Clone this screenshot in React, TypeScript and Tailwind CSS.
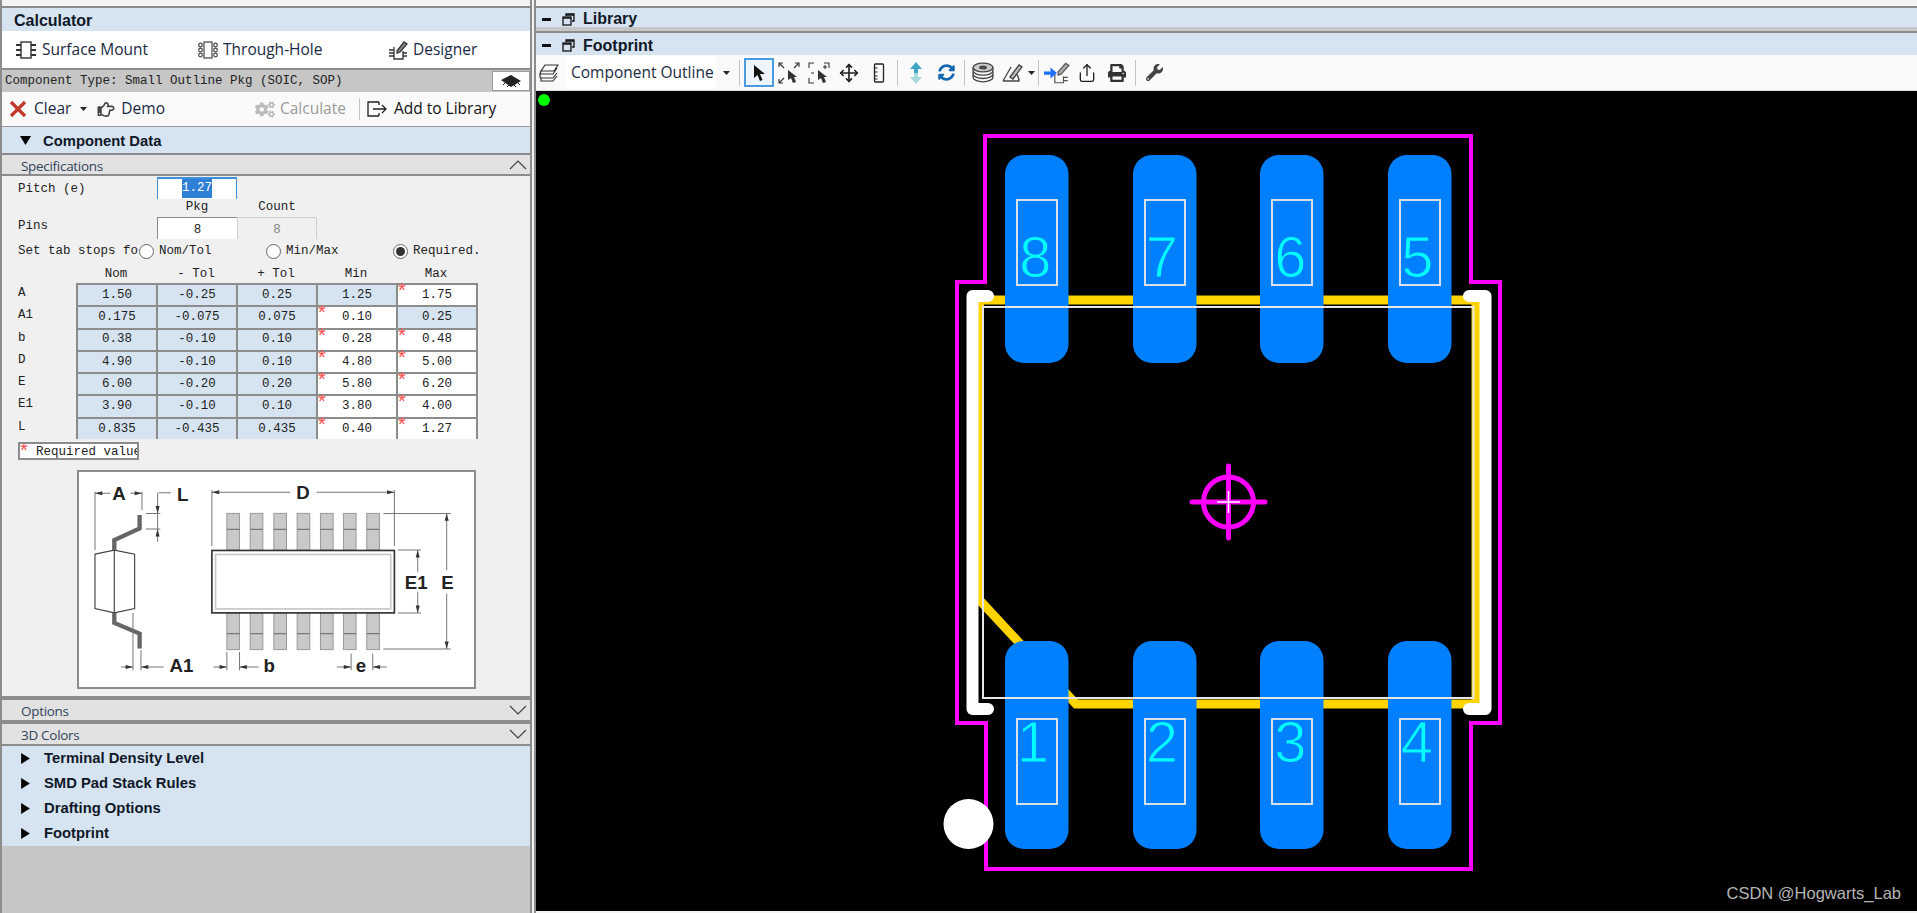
import React from "react";
import { FaCogs, FaPrint, FaRegHandPointRight, FaSyncAlt, FaWrench } from "react-icons/fa";
import { Move, Share } from "lucide-react";

const mono = "font-['Liberation_Mono',monospace] text-[12.5px] text-[#222]";
const ui = "font-['Open_Sans',sans-serif] text-[15.5px] text-[#1a2a44]";
const bold = "font-['Liberation_Sans',sans-serif] font-bold text-[14.8px] text-[#101828]";
const boldLg = "font-['Liberation_Sans',sans-serif] font-bold text-[16px] text-[#101828]";
const star = "absolute font-['Liberation_Sans',sans-serif] text-[#ff4d4d] text-[20px] leading-[20px]";

const rows = [
  { label: "A", vals: ["1.50", "-0.25", "0.25", "1.25", "1.75"], req: [4] },
  { label: "A1", vals: ["0.175", "-0.075", "0.075", "0.10", "0.25"], req: [3] },
  { label: "b", vals: ["0.38", "-0.10", "0.10", "0.28", "0.48"], req: [3, 4] },
  { label: "D", vals: ["4.90", "-0.10", "0.10", "4.80", "5.00"], req: [3, 4] },
  { label: "E", vals: ["6.00", "-0.20", "0.20", "5.80", "6.20"], req: [3, 4] },
  { label: "E1", vals: ["3.90", "-0.10", "0.10", "3.80", "4.00"], req: [3, 4] },
  { label: "L", vals: ["0.835", "-0.435", "0.435", "0.40", "1.27"], req: [3, 4] },
];

const Chevron = ({ up }: { up?: boolean }) => (
  <svg width="18" height="10" viewBox="0 0 18 10" fill="none" stroke="#444" strokeWidth="1.2">
    <polyline points={up ? "1,9 9,1 17,9" : "1,1 9,9 17,1"} />
  </svg>
);

const Caret = ({ open }: { open?: boolean }) => (
  <svg width="11" height="11" viewBox="0 0 10 10" fill="#000">
    <polygon points={open ? "0,1 10,1 5,9" : "1,0 9,5 1,10"} />
  </svg>
);

const SmallDown = () => (
  <svg width="7" height="4" viewBox="0 0 7 4" fill="#222">
    <polygon points="0,0 7,0 3.5,4" />
  </svg>
);

const SectionHeader = ({ title, up, h, mt }: { title: string; up?: boolean; h: string; mt: string }) => (
  <div className={`${h} bg-[#e2e2e2] border-y-2 border-[#8c8c8c] flex items-center justify-between pl-[19px] pr-[3px]`}>
    <span className={`${mt} font-['Open_Sans',sans-serif] text-[13.5px] tracking-[-0.3px] text-[#33435c]`}>{title}</span>
    <Chevron up={up} />
  </div>
);

const IcChip = () => (
  <svg width="22" height="20" viewBox="0 0 22 20" fill="none" stroke="#333" strokeWidth="1.4">
    <rect x="6" y="2" width="10" height="16" />
    <path d="M1 5h5M1 10h5M1 15h5M16 5h5M16 10h5M16 15h5" strokeWidth="2.2" />
  </svg>
);

const IcThrough = () => (
  <svg width="22" height="20" viewBox="0 0 22 20" fill="none" stroke="#444" strokeWidth="1.2">
    <rect x="7" y="2" width="8" height="16" />
    <circle cx="3.5" cy="5" r="1.8" />
    <circle cx="3.5" cy="10" r="1.8" />
    <circle cx="3.5" cy="15" r="1.8" />
    <circle cx="18.5" cy="5" r="1.8" />
    <circle cx="18.5" cy="10" r="1.8" />
    <circle cx="18.5" cy="15" r="1.8" />
  </svg>
);

const IcDesigner = () => (
  <svg width="22" height="20" viewBox="0 0 22 20" fill="none" stroke="#333" strokeWidth="1.3">
    <path d="M7 7v12h9v-8" />
    <path d="M2 10h5M2 13h5M2 16h5M16 13h4M16 16h4" />
    <path d="M10 11l7-9 3 2-7 8-3 1z" fill="#888" />
  </svg>
);

const IcAdd = () => (
  <svg width="21" height="16" viewBox="0 0 21 16" fill="none" stroke="#222" strokeWidth="1.3">
    <path d="M12 1H1v14h11M12 1v3M12 15v-3" />
    <path d="M6 8h13M15 4l4 4-4 4" />
  </svg>
);

const IcLayers = () => (
  <svg width="20" height="20" viewBox="0 0 20 20" fill="none" stroke="#333" strokeWidth="1.2">
    <path d="M6 2h13l-4 6H2zM2 8l-1 3 13 0 4-6" />
    <path d="M1 11v3l1 1h12l4-5" />
    <path d="M2 15v3h12l4-5" />
  </svg>
);

const IcCursor = () => (
  <svg width="14" height="18" viewBox="0 0 14 18" fill="#111">
    <path d="M2 1v13l3.5-3 2.5 6 2.5-1-2.5-6H13z" />
  </svg>
);

const IcZoomFit = () => (
  <svg width="22" height="22" viewBox="0 0 22 22" fill="none" stroke="#333" strokeWidth="1.1">
    <path d="M1 5V1h4M1 1l5 5M21 5V1h-4M21 1l-5 5M1 17v4h4M1 21l5-5" />
    <path d="M10 8v10l3-2 2 5 3-1-2-5h3z" fill="#333" stroke="none" />
  </svg>
);

const IcZoomBox = () => (
  <svg width="22" height="22" viewBox="0 0 22 22" fill="none" stroke="#333" strokeWidth="1.1">
    <path d="M1 6V1h5M1 16v5h5M16 1h5v5M3 11h3M17 3v4M15 5h4" />
    <path d="M10 8v10l3-2 2 5 3-1-2-5h3z" fill="#333" stroke="none" />
  </svg>
);

const IcRuler = () => (
  <svg width="12" height="20" viewBox="0 0 12 20" fill="none" stroke="#222" strokeWidth="1.3">
    <rect x="1.5" y="1" width="9" height="18" rx="1" />
    <path d="M1.5 5h3M1.5 9h3M1.5 13h3M1.5 16h3" strokeWidth="1" />
  </svg>
);

const IcUpDown = () => (
  <svg width="14" height="22" viewBox="0 0 14 22" fill="#3fa6c4">
    <path d="M7 0l6 7H9v4H5V7H1z" />
    <path d="M7 22l-6-7h4v-4h4v4h4z" fill="#a9d8dc" />
  </svg>
);

const IcDisks = () => (
  <svg width="22" height="22" viewBox="0 0 20 20" fill="none" stroke="#444" strokeWidth="1.2">
    <ellipse cx="10" cy="5" rx="9" ry="4" fill="#ccc" />
    <ellipse cx="10" cy="5" rx="3" ry="1.3" fill="#555" />
    <path d="M1 5v3c0 2 4 4 9 4s9-2 9-4V5M1 8v3c0 2 4 4 9 4s9-2 9-4V8M1 11v3c0 2 4 4 9 4s9-2 9-4v-3" />
  </svg>
);

const IcCompass = () => (
  <svg width="22" height="20" viewBox="0 0 22 20" fill="none" stroke="#444" strokeWidth="1.3">
    <path d="M1 18L9 4M1 18h16c0-4-2-7-5-9" />
    <path d="M8 14l9-12 3 2-9 12z" fill="#bbb" />
  </svg>
);

const IcImport = () => (
  <svg width="26" height="22" viewBox="0 0 24 20" fill="none" stroke="#555" strokeWidth="1.1">
    <path d="M10 9v10h8v-6M18 14h4M18 17h4" />
    <path d="M13 9l7-8 3 2-7 8-3 1z" fill="#aaa" />
    <path d="M0 8.5h6V5l6 5-6 5v-3.500H0z" fill="#1f6fff" stroke="none" />
  </svg>
);

const Sep = () => <div className="w-px h-[26px] bg-[#c4c4c4] mx-[3px]" />;
const Btn = ({ children, w = "w-[30px]" }: { children: React.ReactNode; w?: string }) => (
  <div className={`${w} h-[29px] flex items-center justify-center`}>{children}</div>
);

const WinGlyph = () => (
  <div className="flex items-center gap-[11px]">
    <div className="w-[9px] h-[3px] bg-[#111]" />
    <svg width="13" height="13" viewBox="0 0 13 13" fill="none" stroke="#111" strokeWidth="1.3">
      <path d="M4 3V1h8v7h-2" />
      <rect x="1" y="4" width="8" height="8" />
      <path d="M1 5h8M4 2h8" strokeWidth="1.6" />
    </svg>
  </div>
);

const Diagram = () => {
  const xs = [530, 600, 671, 741, 811, 880, 950];
  const lbl = "font-['Liberation_Sans',sans-serif] font-bold text-[56px] fill-[#222]";
  const arrow = (x: number, y: number, dir: string) => {
    const d: Record<string, string> = {
      l: `${x},${y} ${x + 22},${y - 6} ${x + 22},${y + 6}`,
      r: `${x},${y} ${x - 22},${y - 6} ${x - 22},${y + 6}`,
      u: `${x},${y} ${x - 6},${y + 22} ${x + 6},${y + 22}`,
      d: `${x},${y} ${x - 6},${y - 22} ${x + 6},${y - 22}`,
    };
    return <polygon points={d[dir]} fill="#333" stroke="none" />;
  };
  return (
    <svg width="395" height="215" viewBox="86 36 1186 644" preserveAspectRatio="none" fill="none" stroke="#777" strokeWidth="3">
      {xs.map((x) => (
        <g key={x}>
          <rect x={x} y={160} width={38} height={110} fill="#c9c9c9" stroke="#999" />
          <rect x={x} y={458} width={38} height={110} fill="#c9c9c9" stroke="#999" />
          <path d={`M${x} 208h38M${x} 520h38`} stroke="#777" strokeWidth="4" />
        </g>
      ))}
      <rect x={485} y={271} width={548} height={187} fill="#fff" stroke="#333" strokeWidth="5" />
      <rect x={496} y={283} width={526} height={163} fill="#fff" stroke="#c8c8c8" strokeWidth="5" />
      <path d="M134 282L192 270L253 282V445L192 458L134 445Z M192 270V458" fill="#fff" stroke="#444" strokeWidth="3.500" />
      <path d="M268 165V205L192 240V270M192 458V488L268 520V565" stroke="#666" strokeWidth="13" />
      <path d="M134 95V270M275 95V150M325 98H362M322 98V245M287 160H330M287 207H330" />
      <path d="M134 100H180M240 100H275M485 90V258M1033 90V258M485 97H720M800 97H1033" />
      <path d="M1000 160H1202M1000 566H1202M1190 160V330M1190 400V566M1043 270H1113M1043 458H1113M1103 270V335M1103 395V458" />
      <path d="M248 458V630M272 570V630M212 620H248M272 620H340M530 575V630M568 575V630M490 620H530M568 620H625M903 580V630M968 580V630M860 620H903M968 620H1010" />
      {arrow(134, 100, "l")}
      {arrow(275, 100, "r")}
      {arrow(485, 97, "l")}
      {arrow(1033, 97, "r")}
      {arrow(322, 160, "d")}
      {arrow(322, 207, "u")}
      {arrow(1190, 160, "u")}
      {arrow(1190, 566, "d")}
      {arrow(1103, 270, "u")}
      {arrow(1103, 458, "d")}
      {arrow(248, 620, "r")}
      {arrow(272, 620, "l")}
      {arrow(530, 620, "r")}
      {arrow(568, 620, "l")}
      {arrow(903, 620, "r")}
      {arrow(968, 620, "l")}
      <g stroke="none">
        <text x={186} y={120} className={lbl}>A</text>
        <text x={380} y={124} className={lbl}>L</text>
        <text x={738} y={118} className={lbl}>D</text>
        <text x={1064} y={386} className={lbl}>E1</text>
        <text x={1174} y={386} className={lbl}>E</text>
        <text x={358} y={634} className={lbl}>A1</text>
        <text x={640} y={634} className={lbl}>b</text>
        <text x={917} y={634} className={lbl}>e</text>
      </g>
    </svg>
  );
};

const Pad = ({ x, y, n, innerY, textY, tx }: { x: number; y: number; n: string; innerY: number; textY: number; tx: number }) => (
  <g>
    <rect x={x} y={y} width={63.500} height={208} rx={19} fill="#0080ff" />
    <rect x={x + 12} y={innerY} width={40} height={85} fill="none" stroke="#d8dfe6" strokeWidth="2" />
    <text x={tx} y={textY} textAnchor="middle" fill="#00ffff" stroke="#0080ff" strokeWidth="1.2" className="font-['Liberation_Sans',sans-serif] text-[58px]">{n}</text>
  </g>
);

const Canvas = () => (
  <svg className="block w-full h-full" viewBox="536 91 1381 820" fill="none">
    <circle cx={544} cy={100} r={6} fill="#00ff00" />
    <path d="M985 136H1471V282H1500V723H1471V869H986V723H957V282H985Z" stroke="#ff00ff" strokeWidth="4" />
    <path d="M979.500 300H1476V704H1076L979.500 600Z" stroke="#ffd400" strokeWidth="9" />
    <path d="M988 296H972.500V709H988M1469 296H1485.500V709H1469" stroke="#fff" strokeWidth="12" strokeLinecap="round" strokeLinejoin="round" />
    {[
      [1005, "8", 1035.5], [1133, "7", 1162], [1260, "6", 1290.5], [1388, "5", 1417.5],
    ].map(([x, n, tx]) => (
      <Pad key={n as string} x={x as number} y={155} n={n as string} innerY={200} textY={277} tx={tx as number} />
    ))}
    {[
      [1005, "1", 1033], [1133, "2", 1162], [1260, "3", 1290.5], [1388, "4", 1417],
    ].map(([x, n, tx]) => (
      <Pad key={n as string} x={x as number} y={641} n={n as string} innerY={719} textY={762} tx={tx as number} />
    ))}
    <rect x={983} y={307} width={490.500} height={391} stroke="#e6e6e6" strokeWidth="2" />
    <circle cx={968.500} cy={824} r={25} fill="#fff" />
    <circle cx={1228.500} cy={502} r={25} stroke="#ff00ff" strokeWidth="5" />
    <path d="M1228.500 466V538M1192 502H1265" stroke="#ff00ff" strokeWidth="5" strokeLinecap="round" />
    <path d="M1228.500 491V513M1217 502H1240" stroke="#fff" strokeWidth="1.500" />
  </svg>
);

export default function App() {
  return (
    <div className="w-[1917px] h-[913px] flex overflow-hidden bg-[#f3f3f3]">
      {/* left panel */}
      <div className="w-[532px] h-full flex flex-col border-l-2 border-[#8c8c8c] border-r-2 shrink-0">
        <div className="h-[8px] bg-[#f3f3f3] border-b-2 border-[#8c8c8c]" />
        <div className={`h-[23px] bg-[#d6e4f1] flex items-center pl-[12px] pt-[3px] ${boldLg}`}>Calculator</div>
        <div className={`h-[37px] bg-white flex items-center pl-[13px] ${ui}`}>
          <div className="flex items-center gap-[5px] w-[182px]"><IcChip /><span>Surface Mount</span></div>
          <div className="flex items-center gap-[4px] w-[190px]"><IcThrough /><span>Through-Hole</span></div>
          <div className="flex items-center gap-[4px]"><IcDesigner /><span>Designer</span></div>
        </div>
        <div className={`h-[24px] bg-[#c6c6c6] border-t-2 border-[#8c8c8c] flex items-center justify-between pl-[3px] ${mono}`}>
          <span>Component Type: Small Outline Pkg (SOIC, SOP)</span>
          <div className="w-[38px] h-[20px] bg-white border border-[#9a9a9a] flex items-center justify-center">
            <svg width="22" height="14" viewBox="0 0 22 14" fill="#222"><path d="M1 6L11 1l10 6-10 6z" /><path d="M5 9l-2 2M9 11l-2 2M14 11l2 2M18 9l2 2" stroke="#222" /></svg>
          </div>
        </div>
        <div className={`h-[35px] bg-[#fafafa] border-b border-[#9a9a9a] flex items-center pl-[7px] ${ui}`}>
          <svg width="18" height="18" viewBox="0 0 18 18" stroke="#c0392b" strokeWidth="3.200"><path d="M2 2l14 14M16 2L2 16" /></svg>
          <span className="ml-[7px]">Clear</span>
          <span className="ml-[9px] flex"><SmallDown /></span>
          <FaRegHandPointRight className="ml-[10px] w-[18px] h-[17px] text-[#444]" />
          <span className="ml-[6px]">Demo</span>
          <FaCogs className="ml-[90px] w-[20px] h-[17px] text-[#bbb]" />
          <span className="ml-[5px] text-[#9a9a9a]">Calculate</span>
          <div className="w-px h-[22px] bg-[#c4c4c4] ml-[13px]" />
          <span className="ml-[7px] flex"><IcAdd /></span>
          <span className="ml-[6px] text-[#111] whitespace-nowrap">Add to Library</span>
        </div>
        <div className={`h-[26px] bg-[#d6e4f1] flex items-center pl-[18px] ${bold}`}>
          <Caret open />
          <span className="ml-[12px] mt-[2px]">Component Data</span>
        </div>
        <SectionHeader title="Specifications" up h="h-[23px]" mt="mt-[4px]" />

        {/* form */}
        <div className="h-[522px] bg-[#f0f0f0] flex flex-col pl-[16px] border-b-2 border-[#8c8c8c]">
          <div className={`flex items-center h-[23px] ${mono}`}>
            <span className="w-[139px] mt-[4px]">Pitch (e)</span>
            <div className="w-[80px] h-[22px] bg-white border-t-2 border-x border-[#3f8fd8] flex items-center justify-center">
              <span className="bg-[#2f7fd6] text-white">1.27</span>
            </div>
          </div>
          <div className={`flex h-[17px] items-center ml-[139px] ${mono}`}>
            <span className="w-[80px] text-center">Pkg</span>
            <span className="w-[80px] text-center">Count</span>
          </div>
          <div className={`flex items-center h-[23px] ${mono}`}>
            <span className="w-[139px] mb-[2px]">Pins</span>
            <div className="w-[80px] h-[22px] bg-white border-t border-l border-[#8a8a8a] text-center leading-[24px]">8</div>
            <div className="w-[80px] h-[22px] bg-[#f0f0f0] border-t border-x border-[#cfcfcf] text-center leading-[24px] text-[#888]">8</div>
          </div>
          <div className={`flex items-center h-[24px] ${mono}`}>
            <span className="w-[120px] whitespace-nowrap">Set tab stops fo</span>
            {["Nom/Tol", "Min/Max", "Required."].map((t, i) => (
              <div key={t} className="w-[127px] flex items-center gap-[5px] pl-[1px]">
                <div className="w-[15px] h-[15px] rounded-full border border-[#666] bg-white flex items-center justify-center">
                  {i === 2 && <div className="w-[9px] h-[9px] rounded-full bg-[#333]" />}
                </div>
                <span>{t}</span>
              </div>
            ))}
          </div>
          <div className={`flex h-[20px] items-center pl-[58px] pt-[2px] ${mono}`}>
            {["Nom", "- Tol", "+ Tol", "Min", "Max"].map((t) => (
              <span key={t} className="w-[80px] text-center">{t}</span>
            ))}
          </div>
          <div className="flex flex-col">
            {rows.map((r) => (
              <div key={r.label} className={`flex h-[22.3px] ${mono}`}>
                <span className="w-[58px] leading-[20px]">{r.label}</span>
                {r.vals.map((v, i) => {
                  const req = r.req.includes(i);
                  return (
                    <div key={i} className={`relative border-t-2 border-l-2 border-[#8c8c8c] ${i === 4 ? "w-[82px] border-r-2" : "w-[80px]"} ${req ? "bg-white" : "bg-[#d6e4f1]"} flex items-center justify-center`}>
                      {req && <span className={`${star} left-0 top-[-5px]`}>*</span>}
                      <span>{v}</span>
                    </div>
                  );
                })}
              </div>
            ))}
          </div>
          <div className={`relative w-[121px] h-[18px] mt-[3px] bg-white border-2 border-[#8c8c8c] overflow-hidden whitespace-nowrap pl-[16px] leading-[16px] ${mono}`}>
            <span className={`${star} left-0 top-[-4px]`}>*</span>
            Required value
          </div>
          <div className="w-[399px] h-[219px] ml-[59px] mt-[10px] bg-white border-2 border-[#8c8c8c] overflow-hidden">
            <Diagram />
          </div>
        </div>

        <SectionHeader title="Options" h="h-[24px]" mt="mt-[3px]" />
        <SectionHeader title="3D Colors" h="h-[24px]" mt="mt-[3px]" />
        <div className={`h-[100px] bg-[#d6e4f1] flex flex-col pl-[18px] ${bold}`}>
          {["Terminal Density Level", "SMD Pad Stack Rules", "Drafting Options", "Footprint"].map((t) => (
            <div key={t} className="h-[25px] flex items-center gap-[13px]"><Caret /><span>{t}</span></div>
          ))}
        </div>
        <div className="flex-1 bg-[#c6c6c6]" />
      </div>

      {/* right panel */}
      <div className="flex-1 h-full ml-[2px] flex flex-col min-w-0 border-l-2 border-[#8c8c8c]">
        <div className="h-[8px] bg-[#f3f3f3] border-b-2 border-[#8c8c8c]" />
        <div className={`h-[19px] bg-[#d6e4f1] flex items-center pl-[6px] gap-[8px] pt-[3px] ${boldLg}`}><WinGlyph /><span>Library</span></div>
        <div className="h-[6px] bg-[#c6c6c6] border-b-2 border-[#8c8c8c]" />
        <div className={`h-[22px] bg-[#d6e4f1] flex items-center pl-[6px] gap-[8px] pt-[3px] ${boldLg}`}><WinGlyph /><span>Footprint</span></div>
        <div className="h-[36px] bg-[#fafafa] flex items-center pl-[3px] border-b border-[#ddd]">
          <IcLayers />
          <div className={`w-[150px] h-[33px] bg-white ml-[7px] pl-[5px] flex items-center overflow-hidden whitespace-nowrap ${ui}`}>Component Outline</div>
          <div className="w-[20px] flex justify-center"><SmallDown /></div>
          <Sep />
          <div className="ml-[1px] w-[30px] h-[29px] border-2 border-[#4a9be0] bg-[#eef5fc] flex items-center justify-center"><IcCursor /></div>
          <Btn><IcZoomFit /></Btn>
          <Btn><IcZoomBox /></Btn>
          <Btn><Move size={20} color="#222" strokeWidth={2} /></Btn>
          <Btn><IcRuler /></Btn>
          <Sep />
          <Btn><IcUpDown /></Btn>
          <Btn><FaSyncAlt size={17} color="#1565b0" /></Btn>
          <Sep />
          <Btn><IcDisks /></Btn>
          <Btn><IcCompass /></Btn>
          <span className="flex"><SmallDown /></span>
          <Sep />
          <Btn><IcImport /></Btn>
          <Btn><Share size={20} color="#222" strokeWidth={1.6} /></Btn>
          <Btn><FaPrint size={18} color="#333" /></Btn>
          <Sep />
          <Btn><FaWrench size={17} color="#444" /></Btn>
        </div>
        <div className="relative h-[820px] bg-black">
          <Canvas />
          <span className="absolute right-[16px] bottom-[5px] font-['Liberation_Sans',sans-serif] text-[16.5px] text-[#b5b5b5]">CSDN @Hogwarts_Lab</span>
        </div>
        <div className="flex-1 bg-[#f3f3f3]" />
      </div>
    </div>
  );
}
